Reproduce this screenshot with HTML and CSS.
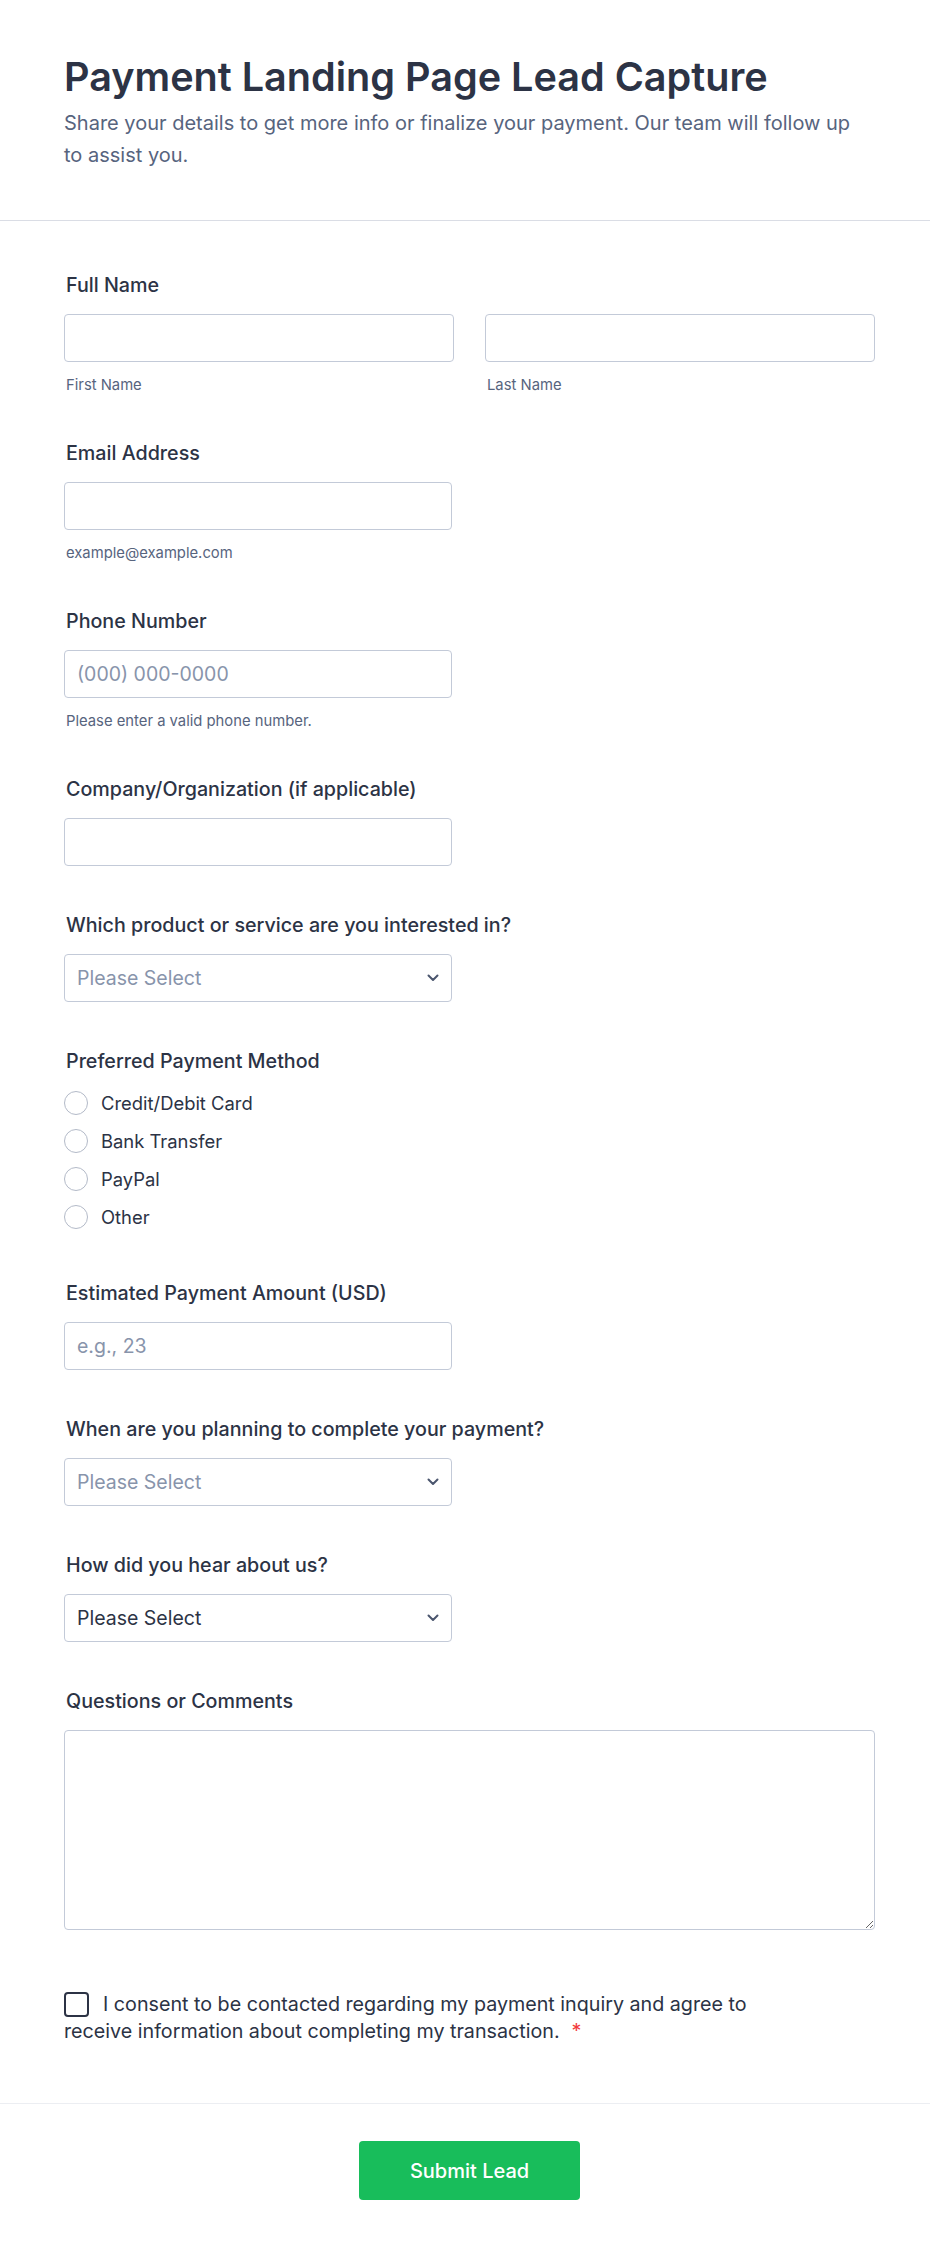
FILE: index.html
```html
<!DOCTYPE html>
<html lang="en">
<head>
<meta charset="utf-8">
<title>Payment Landing Page Lead Capture</title>
<link rel="stylesheet" href="styles.css">
</head>
<body>
<div class="page">
  <header class="header">
    <h1 class="title">Payment Landing Page Lead Capture</h1>
    <p class="subtitle">Share your details to get more info or finalize your payment. Our team will follow up to assist you.</p>
  </header>

  <form class="form">
    <div class="field">
      <label class="label">Full Name</label>
      <div class="name-row">
        <div class="sub-col">
          <input class="input" type="text">
          <span class="sublabel">First Name</span>
        </div>
        <div class="sub-col">
          <input class="input" type="text">
          <span class="sublabel">Last Name</span>
        </div>
      </div>
    </div>

    <div class="field">
      <label class="label">Email Address</label>
      <input class="input short" type="email">
      <span class="sublabel">example@example.com</span>
    </div>

    <div class="field">
      <label class="label">Phone Number</label>
      <input class="input short" type="tel" placeholder="(000) 000-0000">
      <span class="sublabel">Please enter a valid phone number.</span>
    </div>

    <div class="field">
      <label class="label">Company/Organization (if applicable)</label>
      <input class="input short" type="text">
    </div>

    <div class="field">
      <label class="label">Which product or service are you interested in?</label>
      <div class="select-wrap">
        <select class="input select placeholder"><option>Please Select</option></select>
        <svg class="chev" width="12" height="8" viewBox="0 0 12 8"><path d="M1.5 1.5 L6 6 L10.5 1.5" fill="none" stroke="#4b566e" stroke-width="2" stroke-linecap="round" stroke-linejoin="round"/></svg>
      </div>
    </div>

    <div class="field">
      <label class="label radio-label">Preferred Payment Method</label>
      <div class="options">
        <label class="option"><span class="radio"></span>Credit/Debit Card</label>
        <label class="option"><span class="radio"></span>Bank Transfer</label>
        <label class="option"><span class="radio"></span>PayPal</label>
        <label class="option"><span class="radio"></span>Other</label>
      </div>
    </div>

    <div class="field">
      <label class="label">Estimated Payment Amount (USD)</label>
      <input class="input short" type="text" placeholder="e.g., 23">
    </div>

    <div class="field">
      <label class="label">When are you planning to complete your payment?</label>
      <div class="select-wrap">
        <select class="input select placeholder"><option>Please Select</option></select>
        <svg class="chev" width="12" height="8" viewBox="0 0 12 8"><path d="M1.5 1.5 L6 6 L10.5 1.5" fill="none" stroke="#4b566e" stroke-width="2" stroke-linecap="round" stroke-linejoin="round"/></svg>
      </div>
    </div>

    <div class="field">
      <label class="label">How did you hear about us?</label>
      <div class="select-wrap">
        <select class="input select"><option>Please Select</option></select>
        <svg class="chev" width="12" height="8" viewBox="0 0 12 8"><path d="M1.5 1.5 L6 6 L10.5 1.5" fill="none" stroke="#4b566e" stroke-width="2" stroke-linecap="round" stroke-linejoin="round"/></svg>
      </div>
    </div>

    <div class="field">
      <label class="label">Questions or Comments</label>
      <textarea class="input textarea"></textarea>
    </div>

    <div class="consent">
      <span class="checkbox"></span><span class="consent-text">I consent to be contacted regarding my payment inquiry and agree to receive information about completing my transaction.</span><span class="req">*</span>
    </div>
  </form>

  <footer class="footer">
    <button class="submit" type="button">Submit Lead</button>
  </footer>
</div>
</body>
</html>
```

FILE: styles.css
```css
* {
  box-sizing: border-box;
}

body {
  margin: 0;
  background: #ffffff;
  font-family: Inter, "Noto Sans", "Liberation Sans", sans-serif;
  color: #2c3345;
}

.header {
  padding: 53px 55px 49px 64px;
  border-bottom: 1px solid #dadde5;
}

.title {
  margin: 0;
  font-size: 39.6px;
  line-height: 48px;
  font-weight: 600;
  color: #2c3345;
}

.subtitle {
  max-width: 795px;
  margin: 6px 0 0;
  font-size: 20px;
  line-height: 32px;
  color: #57647e;
}

.form {
  display: flex;
  flex-direction: column;
  gap: 47px;
  padding: 52px 55px 58px 64px;
}

.field {
  display: flex;
  flex-direction: column;
  align-items: flex-start;
}

.label {
  display: block;
  padding-left: 2px;
  margin-bottom: 17px;
  font-size: 19.7px;
  line-height: 24px;
  font-weight: 500;
  color: #2c3345;
}

.name-row {
  display: grid;
  grid-template-columns: 1fr 1fr;
  column-gap: 31px;
  width: 100%;
}

.sub-col {
  display: flex;
  flex-direction: column;
}

.input {
  display: block;
  width: 100%;
  height: 48px;
  padding: 0 12px;
  border: 1px solid #c3cad8;
  border-radius: 4px;
  background: #ffffff;
  font-family: Inter, "Noto Sans", "Liberation Sans", sans-serif;
  font-size: 19.5px;
  color: #2c3345;
  outline: none;
}

.input::placeholder {
  color: #8894ab;
}

.short {
  width: 388px;
}

.sublabel {
  display: block;
  margin-top: 14px;
  padding-left: 2px;
  font-size: 14.8px;
  line-height: 18px;
  color: #57647e;
}

.select-wrap {
  position: relative;
  width: 388px;
}

.select {
  appearance: none;
  -webkit-appearance: none;
  width: 388px;
  padding-right: 40px;
}

.select.placeholder {
  color: #8894ab;
}

.chev {
  position: absolute;
  right: 13px;
  top: 20px;
}

.radio-label {
  margin-bottom: 11px;
}

.options {
  display: flex;
  flex-direction: column;
  margin-bottom: -2px;
}

.option {
  display: flex;
  align-items: center;
  gap: 13px;
  height: 38px;
  font-size: 18.4px;
  color: #2c3345;
}

.radio {
  width: 24px;
  height: 24px;
  border: 1px solid #b3bac8;
  border-radius: 50%;
  background: #ffffff;
  flex: none;
}

.textarea {
  width: 100%;
  height: 200px;
  padding: 12px;
  resize: vertical;
}

.consent {
  max-width: 720px;
  margin-top: 14px;
  font-size: 19.7px;
  line-height: 27px;
  color: #2c3345;
}

.checkbox {
  display: inline-block;
  width: 25px;
  height: 25px;
  margin-right: 14px;
  border: 2px solid #2c3345;
  border-radius: 4px;
  vertical-align: -6px;
}

.req {
  margin-left: 12px;
  color: #f23a3c;
}

.footer {
  display: flex;
  justify-content: center;
  padding: 37px 55px 50px 64px;
  border-top: 1px solid #eceef2;
}

.submit {
  width: 221px;
  height: 59px;
  border: none;
  border-radius: 4px;
  background: #18bd5b;
  color: #ffffff;
  font-family: Inter, "Noto Sans", "Liberation Sans", sans-serif;
  font-size: 20px;
  font-weight: 500;
  cursor: pointer;
}
```
